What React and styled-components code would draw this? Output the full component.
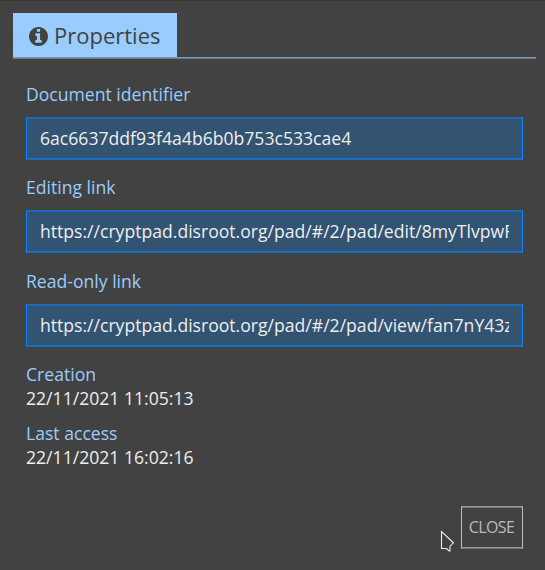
import React from "react";
import styled, { createGlobalStyle } from "styled-components";

const GlobalStyle = createGlobalStyle`
  * { box-sizing: border-box; }
  body { margin: 0; background: #424242; font-family: "Open Sans", sans-serif; }
`;

const Dialog = styled.main`
  width: 545px;
  height: 570px;
  padding: 12px 9px 0 13px;
  background: #424242;
  border-top: 1px solid #383838;
  overflow: hidden;
  position: relative;
`;

const TabBar = styled.nav`
  display: flex;
  height: 46px;
  border-bottom: 1px solid #647c94;
  box-shadow: inset 0 -1px #7f97b4;
`;

const Tab = styled.div`
  display: flex;
  align-items: center;
  width: 164px;
  height: 44px;
  padding-left: 16px;
  gap: 6px;
  background: #99ccff;
  color: #424242;
  font-size: 22px;
  line-height: 30px;
`;

const InfoIcon = styled.svg`
  width: 19px;
  height: 19px;
  margin-top: 2px;
  fill: currentColor;
`;

const Content = styled.section`
  width: 497px;
  margin: 23px 0 0 13px;
`;

const Field = styled.div`
  height: 93.4px;
`;

const Label = styled.label`
  display: block;
  height: 24px;
  color: #99ccff;
  font-size: 17.6px;
  line-height: 24px;
`;

const Input = styled.input`
  display: block;
  width: 100%;
  height: 43px;
  margin-top: 11px;
  padding: 0 13px 1px;
  border: 1px solid #0a84ff;
  border-top-color: #176fc4;
  border-bottom-color: #1d68ae;
  border-radius: 0;
  outline: 0;
  background: #325372;
  box-shadow: inset 0 1px #1f67ab, inset 0 -1px #1175d5;
  color: #eee;
  font: 17.6px "Open Sans", sans-serif;
`;

const Detail = styled.div`
  height: 59px;
`;

const Value = styled.div`
  color: #eee;
  font-size: 17.6px;
  line-height: 24px;
`;

const Footer = styled.footer`
  display: flex;
  justify-content: flex-end;
  margin: 26px 13px 0 0;
`;

const CloseButton = styled.button`
  width: 62px;
  height: 43px;
  padding: 0 1px 1px 0;
  border: 1px solid #bbb;
  border-top-color: #999;
  border-bottom-color: #777;
  box-shadow: inset 0 1px #777, inset 0 -1px #999;
  background: transparent;
  color: #bbb;
  font: 16px "Open Sans", sans-serif;
  letter-spacing: -0.6px;
`;

const Cursor = styled.svg`
  position: absolute;
  left: 440px;
  top: 528px;
`;

const fields = [
  ["Document identifier", "6ac6637ddf93f4a4b6b0b753c533cae4"],
  ["Editing link", "https://cryptpad.disroot.org/pad/#/2/pad/edit/8myTlvpwRk"],
  ["Read-only link", "https://cryptpad.disroot.org/pad/#/2/pad/view/fan7nY43zk"],
];
const details = [
  ["Creation", "22/11/2021 11:05:13"],
  ["Last access", "22/11/2021 16:02:16"],
];

export default function App() {
  return (
    <Dialog>
      <GlobalStyle />
      <TabBar>
        <Tab>
          <InfoIcon viewBox="128 128 1536 1536">
            <path d="M1152 1376v-160q0-14-9-23t-23-9h-96v-512q0-14-9-23t-23-9h-320q-14 0-23 9t-9 23v160q0 14 9 23t23 9h96v320h-96q-14 0-23 9t-9 23v160q0 14 9 23t23 9h448q14 0 23-9t9-23zm-128-896v-160q0-14-9-23t-23-9h-192q-14 0-23 9t-9 23v160q0 14 9 23t23 9h192q14 0 23-9t9-23zm640 416q0 209-103 385.5t-279.5 279.5-385.5 103-385.5-103-279.5-279.5-103-385.5 103-385.5 279.5-279.5 385.5-103 385.5 103 279.5 279.5 103 385.5z" />
          </InfoIcon>
          Properties
        </Tab>
      </TabBar>
      <Content>
        {fields.map(([label, value]) => (
          <Field key={label}><Label>{label}</Label><Input readOnly value={value} /></Field>
        ))}
        {details.map(([label, value]) => (
          <Detail key={label}><Label as="div">{label}</Label><Value>{value}</Value></Detail>
        ))}
      </Content>
      <Footer><CloseButton>CLOSE</CloseButton></Footer>
      <Cursor width="16" height="23" viewBox="0 0 16 23">
        <path d="M1.5 2.5v17h5l2.5 2.5h1v-4.8l3.4-3.4Z" fill="#404040" stroke="#eee" strokeWidth="1.1" />
      </Cursor>
    </Dialog>
  );
}
